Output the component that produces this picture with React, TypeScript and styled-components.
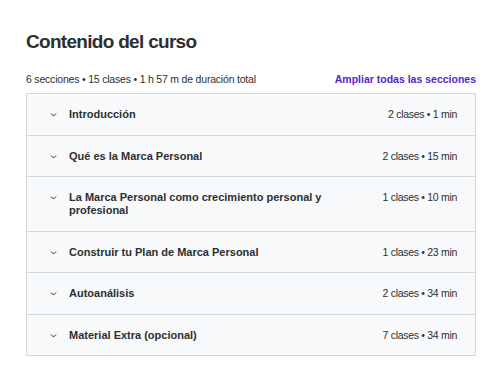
import styled, { createGlobalStyle } from "styled-components";

const GlobalStyle = createGlobalStyle`
  body {
    margin: 0;
    background: #ffffff;
    font-family: "Liberation Sans", Arial, sans-serif;
    color: #2d2f31;
  }
`;

const Page = styled.div`
  width: 450px;
  padding: 30px 24px 0 26px;
`;

const Title = styled.h2`
  margin: 0 0 19px;
  font-size: 19px;
  font-weight: 700;
  line-height: 24px;
  letter-spacing: -0.7px;
  color: #2d2f31;
`;

const MetaBar = styled.div`
  display: flex;
  align-items: center;
  justify-content: space-between;
  margin-bottom: 8px;
`;

const Stats = styled.span`
  font-size: 10.5px;
  letter-spacing: -0.2px;
  color: #2d2f31;
`;

const ExpandLink = styled.button`
  border: 0;
  background: none;
  padding: 0;
  font-family: inherit;
  font-size: 10.5px;
  font-weight: 700;
  color: #5624d0;
  cursor: pointer;
`;

const Sections = styled.div`
  border: 1px solid #d1d7dc;
  border-bottom: 0;
`;

const SectionRow = styled.div`
  display: flex;
  align-items: flex-start;
  gap: 24px;
  padding: 14px 18px 13.5px 22px;
  background: #f7f9fa;
  border-bottom: 1px solid #d1d7dc;
`;

const SectionTitle = styled.div`
  flex: 1;
  display: flex;
  align-items: flex-start;
  gap: 12px;
  font-size: 11px;
  font-weight: 700;
  line-height: 13px;
  color: #2d2f31;
`;

const Chevron = styled.svg`
  flex: none;
  width: 7px;
  height: 13px;
  margin-left: 1px;
`;

const Summary = styled.span`
  flex: none;
  font-size: 10.5px;
  line-height: 13px;
  letter-spacing: -0.3px;
  color: #2d2f31;
`;

const sections = [
  { title: "Introducción", summary: "2 clases • 1 min" },
  { title: "Qué es la Marca Personal", summary: "2 clases • 15 min" },
  {
    title: "La Marca Personal como crecimiento personal y profesional",
    summary: "1 clases • 10 min",
  },
  { title: "Construir tu Plan de Marca Personal", summary: "1 clases • 23 min" },
  { title: "Autoanálisis", summary: "2 clases • 34 min" },
  { title: "Material Extra (opcional)", summary: "7 clases • 34 min" },
];

const App: React.FC = () => {
  return (
    <>
      <GlobalStyle />
      <Page>
        <Title>Contenido del curso</Title>
        <MetaBar>
          <Stats>6 secciones • 15 clases • 1 h 57 m de duración total</Stats>
          <ExpandLink>Ampliar todas las secciones</ExpandLink>
        </MetaBar>
        <Sections>
          {sections.map((s) => (
            <SectionRow key={s.title}>
              <SectionTitle>
                <Chevron viewBox="0 0 7 13">
                  <path
                    d="M1 5.5 L3.5 8 L6 5.5"
                    fill="none"
                    stroke="#2d2f31"
                    strokeWidth="1"
                  />
                </Chevron>
                <span>{s.title}</span>
              </SectionTitle>
              <Summary>{s.summary}</Summary>
            </SectionRow>
          ))}
        </Sections>
      </Page>
    </>
  );
};

export default App;
